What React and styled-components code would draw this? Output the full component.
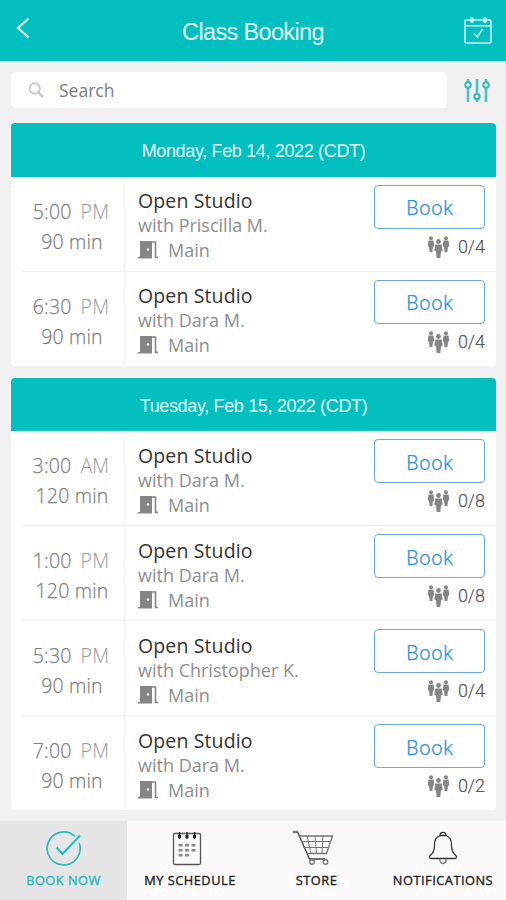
import styled, { createGlobalStyle } from "styled-components";

const GlobalStyle = createGlobalStyle`
  * {
    box-sizing: border-box;
  }

  body {
    margin: 0;
    background: #f1f1f1;
    font-family: "Open Sans", "Noto Sans", sans-serif;
  }
`;

const Screen = styled.div`
  display: flex;
  flex-direction: column;
  width: 506px;
  height: 900px;
  overflow: hidden;
`;

const Header = styled.header`
  display: grid;
  grid-template-columns: 60px 1fr 60px;
  flex: none;
  height: 62px;
  background: #03bfc0;
  border-bottom: 1px solid #9fe0e1;
  color: #fff;
`;

const HeaderAction = styled.div`
  display: flex;
  justify-content: ${(props) => (props.$right ? "flex-end" : "flex-start")};
  padding: ${(props) => (props.$right ? "15px 13px 0 0" : "16px 0 0 15px")};
`;

const Title = styled.h1`
  margin: 0;
  padding-top: 3px;
  font-family: "Liberation Sans", Arial, sans-serif;
  font-size: 23.5px;
  font-weight: 400;
  letter-spacing: -0.65px;
  line-height: 58px;
  text-align: center;
  color: #e0f8f8;
`;

const Content = styled.main`
  display: flex;
  flex: 1;
  flex-direction: column;
  min-height: 0;
  overflow: hidden;
`;

const SearchRow = styled.div`
  display: flex;
  flex: none;
  gap: 17px;
  padding: 10px 14px 15px 11px;
`;

const SearchBox = styled.div`
  display: flex;
  align-items: center;
  gap: 14px;
  width: 436px;
  height: 36px;
  padding-left: 17px;
  background: #fff;
  border-radius: 5px;
  font-size: 17.5px;
  line-height: 36px;
  color: #7c7c7c;
`;

const Card = styled.section`
  flex: none;
  margin: 0 10px 12px 11px;
  background: #fff;
  border-radius: 4px;
  overflow: hidden;
`;

const DayHeading = styled.h2`
  height: 53.5px;
  margin: 0;
  background: #03bfc0;
  font-family: "Liberation Sans", Arial, sans-serif;
  font-size: 18px;
  font-weight: 400;
  letter-spacing: -0.35px;
  line-height: 56px;
  text-align: center;
  color: #e0f8f8;
`;

const Row = styled.div`
  display: grid;
  grid-template-columns: 103px 1fr 111px;
  height: ${(props) => (props.$last ? "94px" : "95px")};
  margin-left: 11px;
  padding-right: 11px;
  border-bottom: ${(props) => (props.$last ? "none" : "1px solid #f0f0f0")};
`;

const TimeColumn = styled.div`
  padding: 20px 4px 0 0;
  border-right: 1px solid #f3f3f3;
  font-size: 19.5px;
  font-weight: 300;
  letter-spacing: 0.2px;
  line-height: 30px;
  text-align: center;
  white-space: nowrap;
  color: #808080;
  -webkit-text-stroke: 0.25px #808080;
`;

const Meridiem = styled.span`
  margin-left: 9px;
  color: #999;
  -webkit-text-stroke: 0;
`;

const Duration = styled.div`
  padding-left: 2px;
`;

const Details = styled.div`
  padding: 11.5px 0 0 13px;
  white-space: nowrap;
`;

const ClassName = styled.div`
  font-size: 19.5px;
  letter-spacing: 0.12px;
  line-height: 25px;
  color: #333;
`;

const Teacher = styled.div`
  font-size: 18px;
  line-height: 25px;
  color: #8e8e8e;
`;

const Room = styled.div`
  display: flex;
  align-items: center;
  gap: 10px;
  font-size: 18px;
  line-height: 24px;
  color: #8e8e8e;
`;

const Actions = styled.div`
  padding-top: 8px;
`;

const BookButton = styled.button`
  display: block;
  width: 111px;
  height: 44px;
  padding: 3px 0 0 1px;
  background: #fff;
  border: 1.5px solid #6ba8e8;
  border-radius: 4px;
  font-family: Roboto, sans-serif;
  font-size: 20px;
  font-weight: 300;
  letter-spacing: 0.8px;
  color: #2f93e6;
  -webkit-text-stroke: 0.25px #2f93e6;
`;

const Spots = styled.div`
  display: flex;
  align-items: center;
  justify-content: flex-end;
  gap: 7px;
  padding-top: 6px;
  font-family: Roboto, sans-serif;
  font-size: 18px;
  font-weight: 300;
  line-height: 24px;
  color: #555;
  -webkit-text-stroke: 0.2px #555;
`;

const TabBar = styled.nav`
  display: grid;
  grid-template-columns: 127px 126px 127px 126px;
  flex: none;
  height: 79px;
  background: #fcfafb;
`;

const Tab = styled.div`
  display: flex;
  flex-direction: column;
  align-items: center;
  padding-top: 8px;
  background: ${(props) => (props.$active ? "#e5e5e5" : "transparent")};
  color: ${(props) => (props.$active ? "#27b9ba" : "#222")};
`;

const TabLabel = styled.span`
  margin-top: 4px;
  font-size: 12.8px;
  line-height: 18px;
  letter-spacing: 0.5px;
  white-space: nowrap;
  -webkit-text-stroke: 0.35px currentColor;
`;

function BackIcon() {
  return (
    <svg width="16" height="24" fill="none" stroke="#e9fbfb" strokeWidth="2">
      <path d="M13.500 2.500 3 12l10.500 9.500" />
    </svg>
  );
}

function CalendarCheckIcon() {
  return (
    <svg width="30" height="30" fill="none" stroke="#c9f1f1" strokeWidth="1.600">
      <rect x="2" y="5" width="26" height="23" rx="1" />
      <path d="M2 10.800h26" />
      <path d="M11 18.500l3.500 3.500 5-8" />
      <path d="M9 4v2M22 4v2" strokeWidth="3.800" strokeLinecap="round" />
    </svg>
  );
}

function SearchIcon() {
  return (
    <svg width="17" height="18" fill="none" stroke="#c4c4c4" strokeWidth="1.600">
      <circle cx="6.700" cy="7.500" r="5.200" />
      <path d="M10.500 11.500l4.500 4.500" strokeWidth="2.300" />
    </svg>
  );
}

function FilterIcon() {
  return (
    <svg width="27" height="36" fill="none" stroke="#35b9bb" strokeWidth="2">
      <path d="M4 7v3M4 16v14M13 7v14M13 27v3M22 7v3M22 16v14" strokeWidth="2.600" opacity="0.850" />
      <circle cx="4" cy="13" r="2.700" />
      <circle cx="13" cy="24.500" r="2.700" />
      <circle cx="22" cy="13" r="2.700" />
    </svg>
  );
}

function DoorIcon() {
  return (
    <svg width="20" height="20" fill="#858585">
      <path d="M2 1h12v17.500H0V17h2z" />
      <path d="M14 2h3.500v15.500H20" fill="none" stroke="#858585" strokeWidth="1.600" />
      <circle cx="10" cy="9.500" r="1.300" fill="#fff" />
    </svg>
  );
}

function PeopleIcon() {
  return (
    <svg width="24" height="22" fill="#858585">
      <circle cx="4" cy="2.300" r="2" />
      <path d="M1.500 4.500h5L7.300 10l-1.300 1-.6 5H2.600L2 11 .7 10z" />
      <circle cx="19" cy="2.300" r="2" />
      <path d="M16.500 4.500h5l.8 5.500-1.300 1-.6 5h-2.800l-.6-5-1.300-1z" />
      <circle cx="11.500" cy="5.500" r="2.400" />
      <path d="M8.300 8.500h6.400l1 6-1.700 1-.7 6.500h-3.600L9 15.500l-1.700-1z" />
    </svg>
  );
}

function BookNowIcon() {
  return (
    <svg width="38" height="38" fill="none" stroke="#2bbcbd">
      <path d="M30 7.500A16.500 16.500 0 1 0 34.200 14" strokeWidth="1.700" />
      <path d="M11.500 18.500l6 6.500L35 6.500" strokeWidth="2.100" />
    </svg>
  );
}

function ScheduleIcon() {
  const dots = [[6.500, 15], [13, 15], [19.500, 15], [6.500, 20], [13, 20], [19.500, 20], [6.500, 25], [13, 25]];

  return (
    <svg width="36" height="38" fill="none" stroke="#555">
      <rect x="1.500" y="4.500" width="27" height="31" rx="1.500" strokeWidth="1.300" />
      <path d="M7.500 3v7M15 3v7M22.500 3v7" stroke="#222" strokeWidth="1.400" />
      <path d="M6 7.500h3M13.500 7.500h3M21 7.500h3" stroke="#222" strokeWidth="3" />
      {dots.map(([x, y]) => (
        <rect key={`${x}-${y}`} x={x} y={y} width="4" height="2.500" fill="#8a8a8a" stroke="none" />
      ))}
    </svg>
  );
}

function CartIcon() {
  return (
    <svg width="50" height="38" fill="none" stroke="#777" strokeWidth="1">
      <path d="M1 3h4.500l12 27h15.500" stroke="#444" strokeWidth="1.300" />
      <path d="M7 7h33.500l-6 17.500H15" strokeWidth="1.300" />
      <path d="M9 12.500h29.500M11.500 18.500h25M15 7l4 17.500M23 7l1.500 17.500M31 7l-1 17.500" />
      <circle cx="20" cy="33" r="2.300" fill="#fcfafb" strokeWidth="1.400" />
      <circle cx="33.500" cy="33" r="2.300" fill="#fcfafb" strokeWidth="1.400" />
    </svg>
  );
}

function BellIcon() {
  return (
    <svg width="30" height="38" fill="none" stroke="#333" strokeWidth="1.300">
      <path d="M12 6.500C7.500 8 6.500 11.500 6.500 16c0 6-1.500 8-4.700 11-.8 1.500-.1 2.500 1.200 2.500h24c1.300 0 2-1 1.200-2.500C25 24 23.500 22 23.500 16c0-4.500-1-8-5.500-9.500" />
      <path d="M12 6.500a3 3.200 0 0 1 6 0z" />
      <path d="M11.800 30c0 6 6.400 6 6.400 0" stroke="#777" />
    </svg>
  );
}

const days = [
  {
    label: "Monday, Feb 14, 2022 (CDT)",
    classes: [
      { time: "5:00", meridiem: "PM", duration: "90 min", teacher: "Priscilla M.", spots: "0/4" },
      { time: "6:30", meridiem: "PM", duration: "90 min", teacher: "Dara M.", spots: "0/4" },
    ],
  },
  {
    label: "Tuesday, Feb 15, 2022 (CDT)",
    classes: [
      { time: "3:00", meridiem: "AM", duration: "120 min", teacher: "Dara M.", spots: "0/8" },
      { time: "1:00", meridiem: "PM", duration: "120 min", teacher: "Dara M.", spots: "0/8" },
      { time: "5:30", meridiem: "PM", duration: "90 min", teacher: "Christopher K.", spots: "0/4" },
      { time: "7:00", meridiem: "PM", duration: "90 min", teacher: "Dara M.", spots: "0/2" },
    ],
  },
];

const tabs = [
  { label: "BOOK NOW", Icon: BookNowIcon },
  { label: "MY SCHEDULE", Icon: ScheduleIcon },
  { label: "STORE", Icon: CartIcon },
  { label: "NOTIFICATIONS", Icon: BellIcon },
];

function App() {
  return (
    <Screen>
      <GlobalStyle />
      <Header>
        <HeaderAction>
          <BackIcon />
        </HeaderAction>
        <Title>Class Booking</Title>
        <HeaderAction $right>
          <CalendarCheckIcon />
        </HeaderAction>
      </Header>

      <Content>
        <SearchRow>
          <SearchBox>
            <SearchIcon />
            Search
          </SearchBox>
          <FilterIcon />
        </SearchRow>

        {days.map((day) => (
          <Card key={day.label}>
            <DayHeading>{day.label}</DayHeading>
            {day.classes.map((item, i) => (
              <Row key={item.time} $last={i === day.classes.length - 1}>
                <TimeColumn>
                  <div>
                    {item.time}
                    <Meridiem>{item.meridiem}</Meridiem>
                  </div>
                  <Duration>{item.duration}</Duration>
                </TimeColumn>
                <Details>
                  <ClassName>Open Studio</ClassName>
                  <Teacher>with {item.teacher}</Teacher>
                  <Room>
                    <DoorIcon />
                    Main
                  </Room>
                </Details>
                <Actions>
                  <BookButton>Book</BookButton>
                  <Spots>
                    <PeopleIcon />
                    {item.spots}
                  </Spots>
                </Actions>
              </Row>
            ))}
          </Card>
        ))}
      </Content>

      <TabBar>
        {tabs.map(({ label, Icon }, i) => (
          <Tab key={label} $active={i === 0}>
            <Icon />
            <TabLabel>{label}</TabLabel>
          </Tab>
        ))}
      </TabBar>
    </Screen>
  );
}

export default App;
